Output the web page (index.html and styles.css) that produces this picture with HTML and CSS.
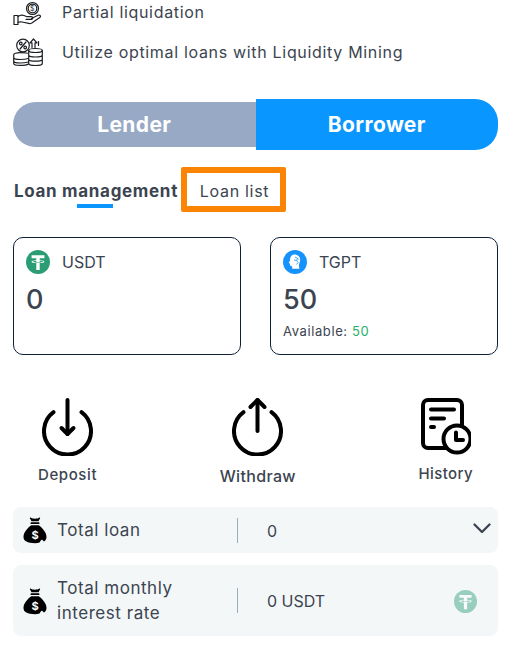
FILE: index.html
```html
<!DOCTYPE html>
<html lang="en">
<head>
<meta charset="utf-8">
<title>Loans</title>
<link rel="stylesheet" href="styles.css">
</head>
<body>
<svg class="defs" width="0" height="0" aria-hidden="true">
  <defs>
    <symbol id="tether" viewBox="0 0 24 24">
      <circle cx="12" cy="12" r="12" fill="currentColor"/>
      <path fill="#fff" d="M5.600 5.200h12.800v3h-4.700v2.100c2.700.1 4.800.7 4.800 1.400s-2.100 1.300-4.800 1.400V20h-3.400v-6.900c-2.700-.1-4.800-.7-4.800-1.400s2.100-1.300 4.800-1.400V8.200H5.600z"/>
      <path fill="currentColor" d="M10.300 11v.9c.5.100 1.100.100 1.700.100s1.200 0 1.700-.1V11c2 .1 3.500.4 3.500.7s-2.300.8-5.200.8-5.200-.4-5.200-.8 1.500-.6 3.500-.7z"/>
    </symbol>
    <symbol id="bag" viewBox="0 0 24 28">
      <path fill="#000" d="M7.500 1.500c1.300.8 2.500 1.200 4.500 1.200s3.200-.4 4.500-1.200c.6 0 .8.500.5 1l-1.500 2.800H8.500L7 2.500c-.3-.5-.1-1 .5-1z"/>
      <rect x="7.500" y="6.300" width="9" height="1.800" rx=".9" fill="#000"/>
      <path fill="#000" d="M8.300 9.300h7.400C19.500 12 23.500 16.500 23.500 21c0 2-1 3.500-2.600 4.500l-1.200-1.300c-.6-.6-1.500-.5-1.900.2l-1.300 2.100c-1.300.5-2.900.7-4.500.7C4.500 27.200.5 25 .5 21c0-4.500 4-9 7.800-11.700z"/>
      <text x="12" y="23" text-anchor="middle" class="bag-sign">$</text>
    </symbol>
  </defs>
</svg>
<main class="page">
  <ul class="features">
    <li class="feature feature-first">
      <svg class="feature-icon" viewBox="0 0 30 25" fill="none" stroke="#1b1f24" stroke-width="1.200" stroke-linejoin="round" stroke-linecap="round">
        <circle cx="19.500" cy="7.500" r="6"/>
        <circle cx="19.500" cy="7.500" r="4.300"/>
        <path d="M1 14.500h4v9H1z"/>
        <path d="M5 15.500c2-1.500 4-1.800 6-1l3 1.200h4.500c1.500 0 1.500 2.600 0 2.600H13"/>
        <path d="M18.500 17.500l6.500-3.200c2-.9 3.400 1 1.800 2.300l-8 5.300c-1 .6-2 .8-3 .5L9 21c-1.500-.3-2.800-.2-4 .3"/>
        <text x="19.500" y="10.200" text-anchor="middle" class="mini-sign">$</text>
      </svg>
      <span>Partial liquidation</span>
    </li>
    <li class="feature feature-second">
      <svg class="feature-icon feature-icon-tall" viewBox="0 0 30 28" fill="none" stroke="#1b1f24" stroke-width="1.200" stroke-linejoin="round" stroke-linecap="round">
        <circle cx="10" cy="7.500" r="6.300"/>
        <path d="M7 11l6-7"/>
        <circle cx="7.800" cy="5.500" r="1.300"/>
        <circle cx="12.200" cy="9.500" r="1.300"/>
        <path d="M19 9.500V4.800h-2L20.500 1 24 4.800h-2v4.700"/>
        <path d="M25.500 7.500V3.500"/>
        <ellipse cx="22.500" cy="12.500" rx="6.800" ry="2"/>
        <path d="M15.700 12.500v13c0 1.100 3 2 6.800 2s6.800-.9 6.800-2v-13M15.700 17c0 1.100 3 2 6.800 2s6.800-.9 6.800-2M15.700 21.200c0 1.100 3 2 6.800 2s6.800-.9 6.800-2"/>
        <path d="M14.500 15.200c-1-.3-2.500-.5-7.500-.5-3.500 0-6.300.8-6.300 2v8.800c0 1.100 2.800 1.900 6.300 1.900 3.500 0 7-.5 8.500-1.500M.700 19.500c0 1.100 2.800 2 6.300 2 3 0 6-.3 8.500-1M.700 23c0 1.100 2.800 2 6.300 2 3 0 6-.3 8.500-1"/>
      </svg>
      <span>Utilize optimal loans with Liquidity Mining</span>
    </li>
  </ul>

  <div class="role-toggle">
    <button class="role role-lender" type="button">Lender</button>
    <button class="role role-borrower" type="button">Borrower</button>
  </div>

  <nav class="tabs">
    <a class="tab tab-active">Loan management</a>
    <a class="tab tab-list">Loan list</a>
  </nav>

  <section class="balances">
    <article class="balance">
      <header class="balance-head">
        <svg class="coin coin-usdt"><use href="#tether"/></svg>
        <span>USDT</span>
      </header>
      <div class="amount">0</div>
    </article>
    <article class="balance">
      <header class="balance-head">
        <svg class="coin" viewBox="0 0 24 24">
          <circle cx="12" cy="12" r="12" fill="#1592fb"/>
          <path fill="#fff" d="M11.500 4.500c3.300 0 5.700 2.300 5.700 5.300 0 2.200-1 3.300-1.200 5-.1 1.300 0 2.700.5 4H9.200c.2-1.200 0-2-.8-2.700-1-.1-1.400-.6-1.300-1.400l-.2-1.200-1-.6c-.2-.3 0-.6 1.100-2.500 0-3.500 1.600-6 4.500-5.900z"/>
          <path fill="none" stroke="#1592fb" stroke-width=".8" d="M12 7l2.500 1.200-.8 2.300 1.300 2-1.500 2M14.500 8.200l1.500 1.500M11 10l2.700.5"/>
        </svg>
        <span>TGPT</span>
      </header>
      <div class="amount">50</div>
      <div class="available">Available: <span class="available-value">50</span></div>
    </article>
  </section>

  <section class="actions">
    <a class="action action-deposit">
      <svg class="action-icon" viewBox="0 0 51 58" fill="none" stroke="#000" stroke-width="4" stroke-linecap="round" stroke-linejoin="round">
        <path d="M11.500 14.200A23.500 23.500 0 1 0 39.500 14.200"/>
        <path d="M25.500 2v34"/>
        <path d="M19.500 30l6 6 6-6"/>
      </svg>
      <span>Deposit</span>
    </a>
    <a class="action action-withdraw">
      <svg class="action-icon" viewBox="0 0 51 59" fill="none" stroke="#000" stroke-width="4" stroke-linecap="round" stroke-linejoin="round">
        <path d="M11.500 15.200A23.500 23.500 0 1 0 39.500 15.200"/>
        <path d="M25.500 3v31"/>
        <path d="M18.500 10L25.500 3l7 7"/>
      </svg>
      <span>Withdraw</span>
    </a>
    <a class="action action-history">
      <svg class="action-icon" viewBox="0 0 50 57" fill="none" stroke="#000" stroke-width="4" stroke-linecap="round" stroke-linejoin="round">
        <path d="M28 50H7a5 5 0 0 1-5-5V7a5 5 0 0 1 5-5h29a5 5 0 0 1 5 5v24"/>
        <path d="M10 11.500h23M10 20.500h13M10 29h3"/>
        <circle cx="36" cy="41" r="13.500" fill="#fff"/>
        <path d="M35 34.500V42h7"/>
      </svg>
      <span>History</span>
    </a>
  </section>

  <section class="summary">
    <div class="summary-row">
      <svg class="bag"><use href="#bag"/></svg>
      <span class="summary-label">Total loan</span>
      <span class="summary-value">0</span>
      <svg class="chevron" viewBox="0 0 18 11" fill="none" stroke="#3a4350" stroke-width="2.300" stroke-linecap="round" stroke-linejoin="round"><path d="M1.500 1.500L9 9l7.500-7.500"/></svg>
    </div>
    <div class="summary-row summary-row-tall">
      <svg class="bag"><use href="#bag"/></svg>
      <span class="summary-label">Total monthly interest rate</span>
      <span class="summary-value">0 USDT</span>
      <svg class="coin coin-faded"><use href="#tether"/></svg>
    </div>
  </section>
</main>
</body>
</html>
```
FILE: styles.css
```css
* { box-sizing: border-box; }
html, body { margin: 0; padding: 0; }
body {
  background: #fff;
  color: #3b4450;
  font-family: Inter, "Noto Sans", sans-serif;
  overflow: hidden;
}
.defs { position: absolute; }
.page { width: 513px; height: 648px; padding: 0 15px 0 13px; overflow: hidden; }

.features { list-style: none; margin: 0; padding: 0; display: flex; flex-direction: column; gap: 12px; }
.feature { display: flex; align-items: center; gap: 20px; height: 28px; font-size: 16px; letter-spacing: .68px; }
.feature span { margin-left: -1px; }
.feature-first { height: 26px; }
.feature-first span { margin-top: -2px; }
.feature-icon { width: 30px; height: 25px; flex: none; }
.feature-icon-tall { height: 28px; }
.mini-sign { font: 400 7px Inter, sans-serif; fill: #1b1f24; stroke: none; }

.role-toggle { display: flex; align-items: center; margin-top: 33px; }
.role { flex: 1 1 0; border: 0; color: #fff; font-family: Inter, sans-serif; font-weight: 700; font-size: 21px; letter-spacing: .4px; padding: 0; }
.role-lender { height: 45px; background: #97a9c5; border-radius: 23px 0 0 23px; }
.role-borrower { height: 51px; background: #0a96ff; border-radius: 0 23px 23px 0; }

.tabs { display: flex; align-items: center; height: 45px; margin-top: 17px; }
.tab { position: relative; font-size: 16px; }
.tab-active { font-weight: 700; padding-left: 1px; padding-top: 2px; width: 168px; font-size: 17px; letter-spacing: .68px; white-space: nowrap; }
.tab-active::after {
  content: "";
  position: absolute;
  left: 64px;
  bottom: -7px;
  width: 36px;
  height: 4px;
  background: #0a96ff;
}
.tab-list {
  width: 105px;
  height: 45px;
  display: flex;
  align-items: center;
  justify-content: center;
  border: 6px solid #fb8405;
  border-radius: 2px;
  padding: 2px 0 0 2px;
  letter-spacing: .7px;
}

.balances { display: grid; grid-template-columns: 228px 228px; gap: 29px; margin-top: 25px; }
.balance { height: 118px; padding: 12px; border: 1px solid #0e2236; border-radius: 10px; background: #fff; }
.balance-head { display: flex; align-items: center; gap: 12px; font-size: 16px; height: 24px; }
.coin { width: 24px; height: 24px; flex: none; }
.coin-usdt { color: #2a9d74; }
.amount { font-size: 27px; font-weight: 500; line-height: 32px; margin-top: 10px; }
.available { font-size: 13px; line-height: 16px; margin-top: 7px; letter-spacing: .6px; }
.available-value { color: #28b06c; }

.actions { display: flex; justify-content: space-between; padding: 0 25px; margin-top: 43px; height: 109px; align-items: flex-start; }
.action { display: flex; flex-direction: column; align-items: center; font-size: 15px; font-weight: 500; letter-spacing: .6px; }
.action-icon { display: block; width: 51px; height: 58px; margin-bottom: 9px; }
.action-withdraw { margin-top: -1px; font-size: 16px; letter-spacing: .35px; }
.action-withdraw .action-icon { height: 59px; margin-bottom: 10px; }
.action-history { letter-spacing: .4px; }
.action-history .action-icon { width: 50px; height: 57px; margin-bottom: 9px; }

.summary { display: flex; flex-direction: column; gap: 12px; }
.summary-row {
  display: grid;
  grid-template-columns: 25px 1fr 261px;
  align-items: center;
  position: relative;
  height: 46px;
  padding: 0 0 0 10px;
  background: #f3f7f8;
  border-radius: 8px;
  font-size: 16px;
}
.summary-row-tall { height: 71px; }
.bag { width: 24px; height: 28px; }
.summary-label { line-height: 25px; width: 135px; font-size: 17px; letter-spacing: .55px; margin-left: 9px; }
.summary-value { border-left: 1px solid #9cacc0; height: 25px; line-height: 26px; padding-left: 29px; }
.chevron { position: absolute; right: 7px; top: 16px; width: 18px; height: 11px; }
.coin-faded { position: absolute; right: 21px; top: 25px; width: 23px; height: 23px; color: #2a9d74; opacity: .45; }
.bag-sign { font: 700 11px Inter, sans-serif; fill: #fff; }
```
